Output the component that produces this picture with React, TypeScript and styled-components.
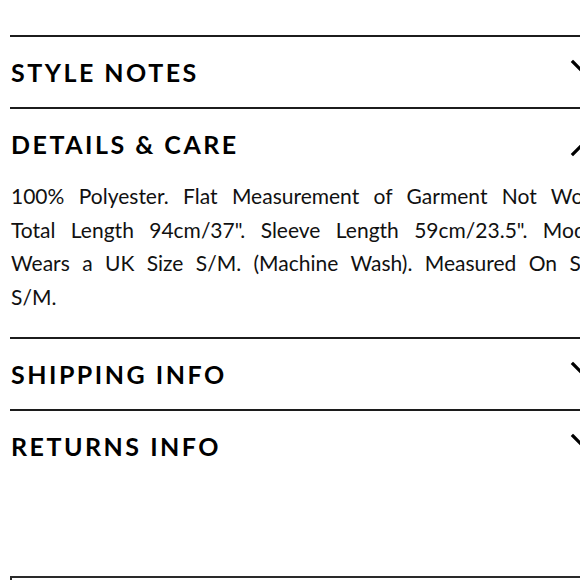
import React from "react";
import styled, { createGlobalStyle } from "styled-components";

const GlobalStyle = createGlobalStyle`
  html, body {
    margin: 0;
    padding: 0;
    background: #ffffff;
    overflow: hidden;
  }
  body {
    font-family: Lato, "Open Sans", sans-serif;
    color: #111111;
  }
`;

type Section = {
  title: string;
  open: boolean;
  lines?: { text: string; spacing: number }[];
};

// the reference is cropped on the right, so the care text is set line by line
const sections: Section[] = [
  { title: "STYLE NOTES", open: false },
  {
    title: "DETAILS & CARE",
    open: true,
    lines: [
      { text: "100% Polyester. Flat Measurement of Garment Not Worn.", spacing: 9 },
      { text: `Total Length 94cm/37". Sleeve Length 59cm/23.5". Model`, spacing: 10 },
      { text: "Wears a UK Size S/M. (Machine Wash). Measured On Size", spacing: 7 },
      { text: "S/M.", spacing: 0 },
    ],
  },
  { title: "SHIPPING INFO", open: false },
  { title: "RETURNS INFO", open: false },
];

function Chevron({ up }: { up: boolean }) {
  return (
    <ChevronIcon $up={up} viewBox="0 0 28 28" width="28" height="28">
      <polyline
        points="3,4 14,15 25,4"
        fill="none"
        stroke="#000"
        strokeWidth="3.2"
        strokeLinecap="square"
      />
    </ChevronIcon>
  );
}

export default function App() {
  return (
    <>
      <GlobalStyle />
      <Page>
        {sections.map((s) => (
          <Accordion key={s.title}>
            <Header>
              <Title>{s.title}</Title>
              <Chevron up={s.open} />
            </Header>
            {s.lines && (
              <Body>
                {s.lines.map((l) => (
                  <Line key={l.text} $spacing={l.spacing}>
                    {l.text}
                  </Line>
                ))}
              </Body>
            )}
          </Accordion>
        ))}
        <SizeBox />
      </Page>
    </>
  );
}

const Page = styled.div`
  width: 630px;
  padding: 35px 0 0 10px;
  display: flex;
  flex-direction: column;
`;

const Accordion = styled.div`
  border-top: 2px solid #1c1c1c;
`;

const Header = styled.div`
  height: 70px;
  display: flex;
  align-items: center;
  justify-content: space-between;
  padding-right: 42px;
`;

const Title = styled.h2`
  margin: 0;
  padding-left: 1px;
  font-family: Lato, sans-serif;
  font-weight: 700;
  font-size: 25px;
  letter-spacing: 2.5px;
  color: #000;
`;

const ChevronIcon = styled.svg<{ $up: boolean }>`
  flex: none;
  display: block;
  transform: ${(p) => (p.$up ? "rotate(180deg)" : "none")};
`;

const Body = styled.div`
  padding: 0 0 24px 1px;
`;

const Line = styled.div<{ $spacing: number }>`
  font-family: Lato, sans-serif;
  font-size: 21px;
  line-height: 33.5px;
  white-space: nowrap;
  word-spacing: ${(p) => p.$spacing}px;
  color: #111;
`;

const SizeBox = styled.div`
  margin-top: 95px;
  height: 50px;
  border: 2px solid #2a2a2a;
`;
